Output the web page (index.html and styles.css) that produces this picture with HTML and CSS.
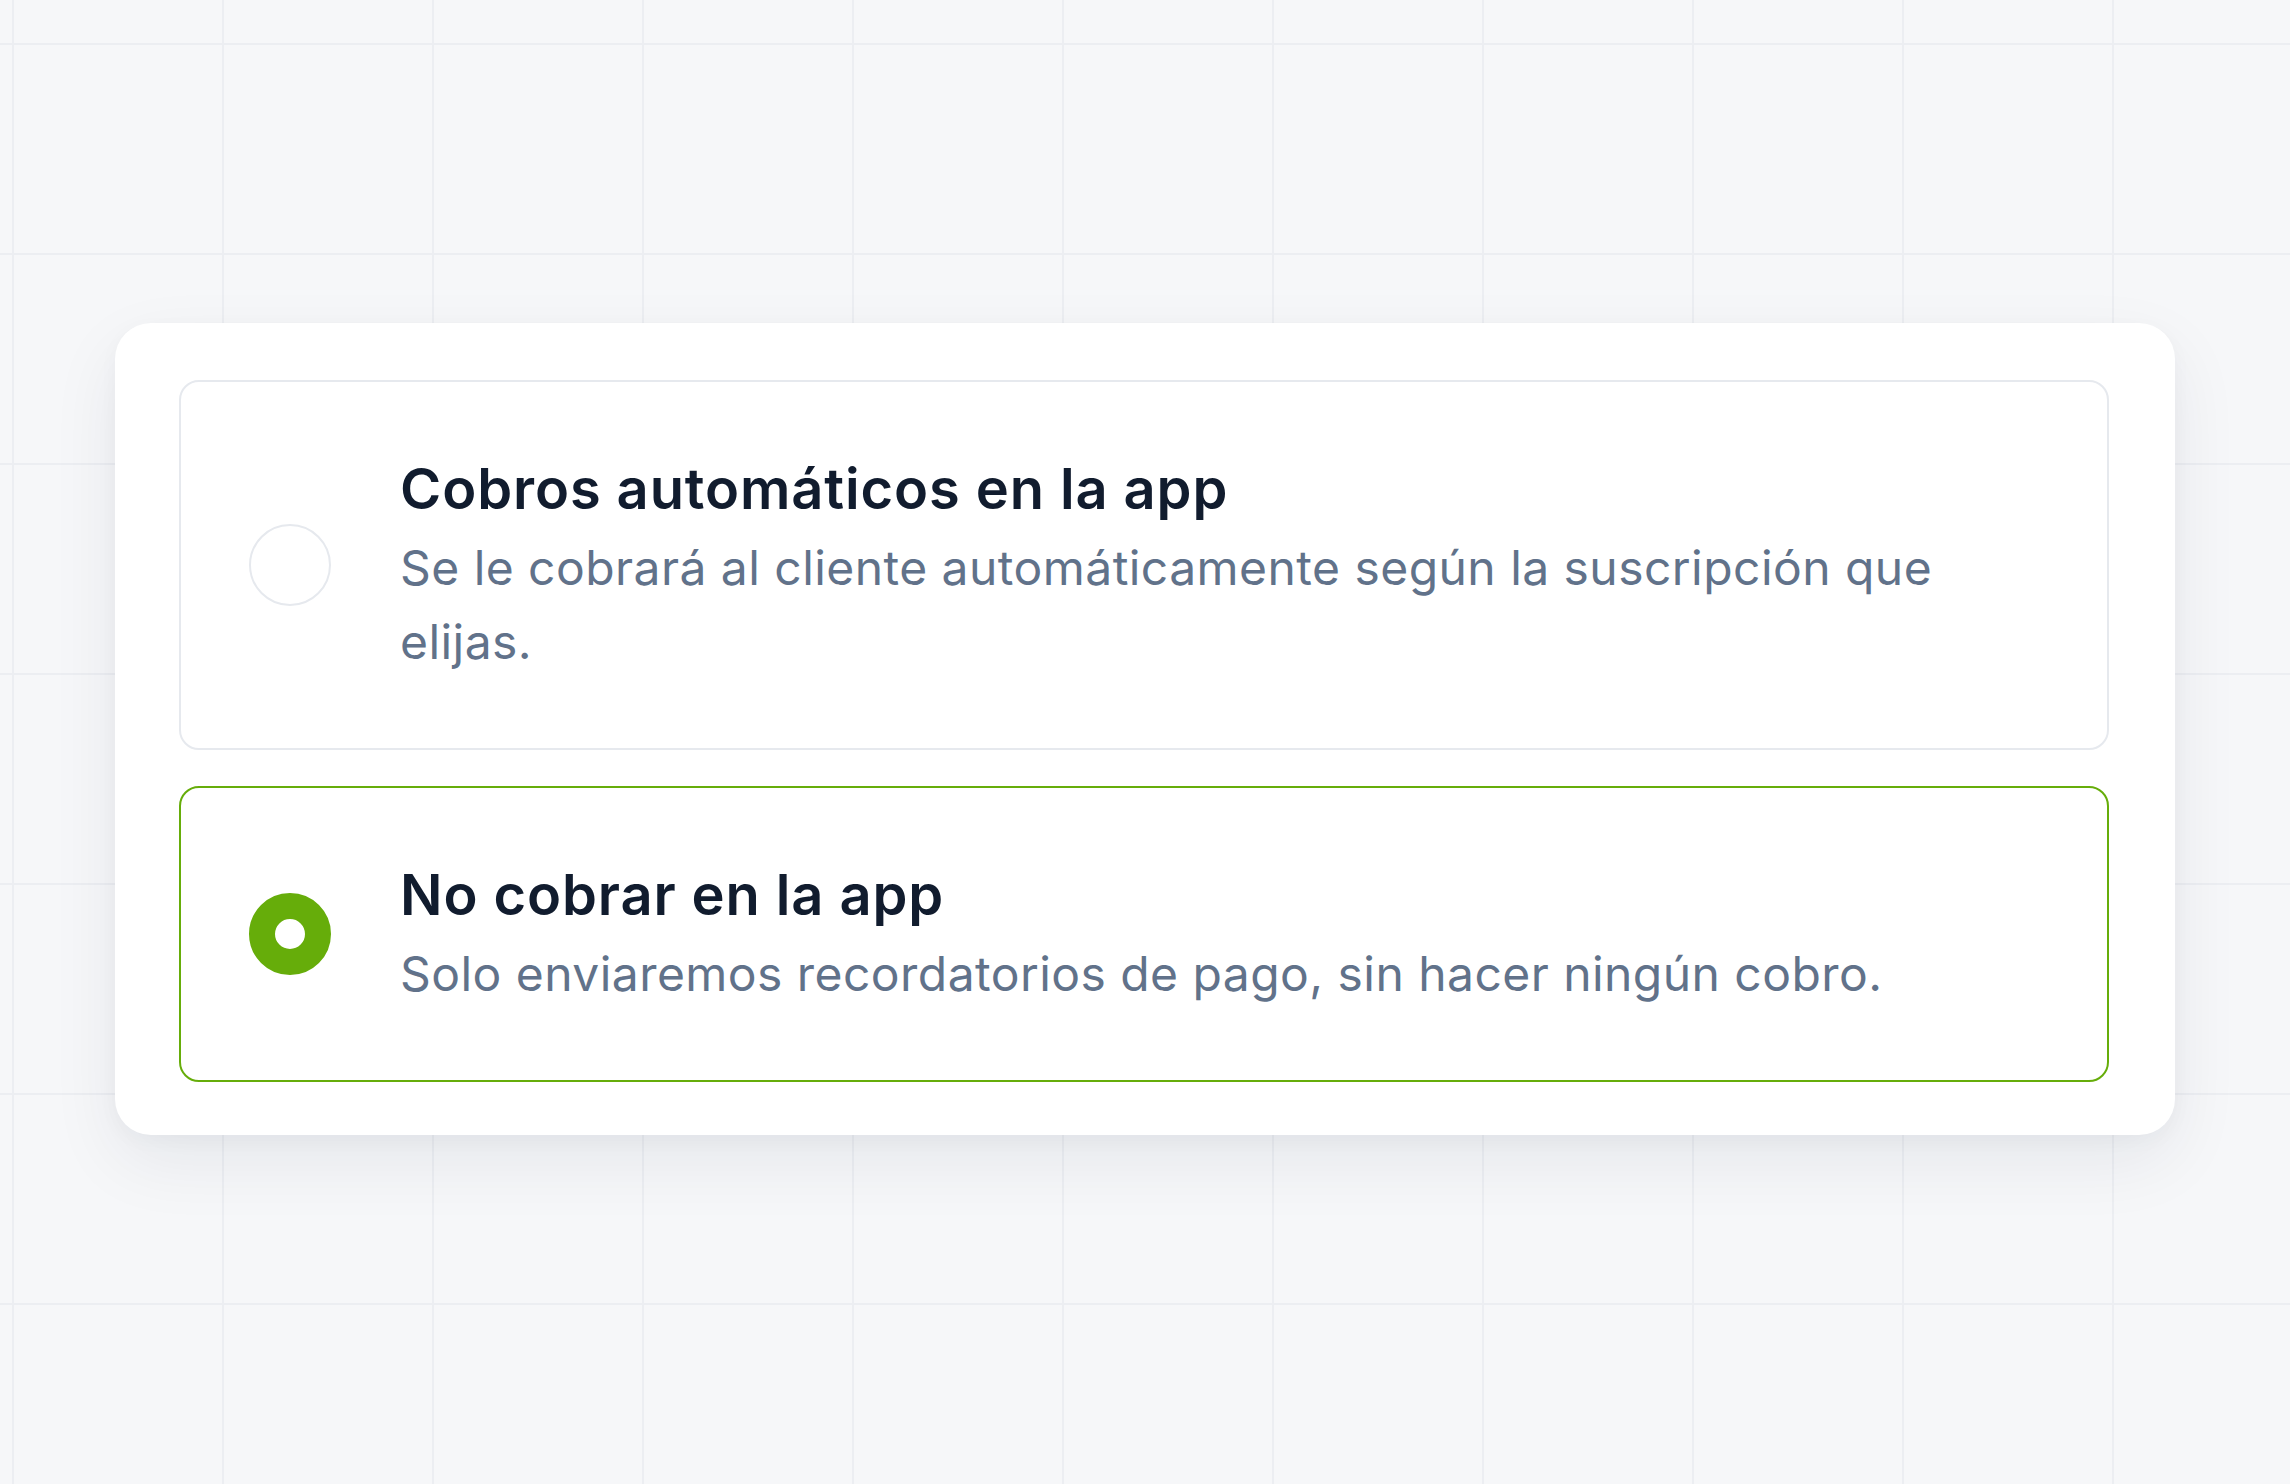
FILE: index.html
```html
<!DOCTYPE html>
<html lang="es">
<head>
<meta charset="utf-8">
<title>Cobros</title>
<link rel="stylesheet" href="styles.css">
</head>
<body>
<main class="page">
  <section class="card">
    <label class="option">
      <span class="radio"></span>
      <span class="text">
        <span class="title">Cobros automáticos en la app</span>
        <span class="desc">Se le cobrará al cliente automáticamente según la suscripción que elijas.</span>
      </span>
    </label>
    <label class="option selected">
      <span class="radio"></span>
      <span class="text">
        <span class="title">No cobrar en la app</span>
        <span class="desc">Solo enviaremos recordatorios de pago, sin hacer ningún cobro.</span>
      </span>
    </label>
  </section>
</main>
</body>
</html>
```

FILE: styles.css
```css
html, body {
  margin: 0;
  padding: 0;
}
body {
  width: 2290px;
  height: 1484px;
  overflow: hidden;
  background-color: #f6f7f9;
  background-image:
    linear-gradient(to right, #eceef2 2px, transparent 2px),
    linear-gradient(to bottom, #eceef2 2px, transparent 2px);
  background-size: 210px 210px;
  background-position: 12px 43px;
  font-family: Inter, "Noto Sans", sans-serif;
}
.page {
  padding-top: 323px;
  display: flex;
  justify-content: center;
}
.card {
  width: 2060px;
  box-sizing: border-box;
  background: #ffffff;
  border-radius: 36px;
  padding: 57px 66px 53px 64px;
  display: flex;
  flex-direction: column;
  gap: 36px;
  box-shadow: 0 26px 70px rgba(20, 30, 50, 0.07), 0 6px 20px rgba(20, 30, 50, 0.03);
}
.option {
  display: flex;
  align-items: center;
  gap: 69px;
  border: 2px solid #e6e9ee;
  border-radius: 20px;
  padding: 69px 68px 69px 68px;
}
.option.selected {
  border-color: #66ad0a;
}
.radio {
  flex: none;
  width: 82px;
  height: 82px;
  box-sizing: border-box;
  border-radius: 50%;
  border: 2px solid #e6e9ee;
  background: #fff;
}
.option.selected .radio {
  border: 26px solid #66ad0a;
}
.text {
  display: flex;
  flex-direction: column;
  min-width: 0;
  flex: 1;
  padding-right: 40px;
}
.title {
  font-size: 56px;
  line-height: 76px;
  font-weight: 600;
  color: #111c2e;
  letter-spacing: 0.9px;
}
.desc {
  margin-top: 4px;
  font-size: 48px;
  line-height: 74px;
  font-weight: 400;
  color: #61728a;
  letter-spacing: 0.45px;
}
```
